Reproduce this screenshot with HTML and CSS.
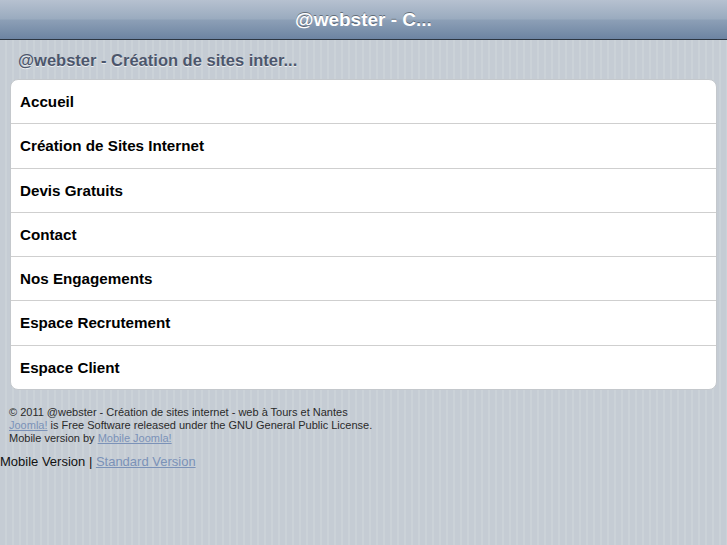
FILE: index.html
```html
<!DOCTYPE html>
<html lang="fr">
<head>
<meta charset="utf-8">
<title>@webster</title>
<link rel="stylesheet" href="styles.css">
</head>
<body>
<div class="toolbar"><h1 class="title">@webster - C...</h1></div>
<h2 class="subtitle">@webster - Création de sites inter...</h2>
<ul class="menu">
  <li class="item">Accueil</li>
  <li class="item">Création de Sites Internet</li>
  <li class="item">Devis Gratuits</li>
  <li class="item">Contact</li>
  <li class="item">Nos Engagements</li>
  <li class="item">Espace Recrutement</li>
  <li class="item">Espace Client</li>
</ul>
<p class="footer">© 2011 @webster - Création de sites internet - web à Tours et Nantes<br><a class="link" href="#">Joomla!</a> is Free Software released under the GNU General Public License.<br>Mobile version by <a class="link" href="#">Mobile Joomla!</a></p>
<p class="switch">Mobile Version | <a class="link" href="#">Standard Version</a></p>
</body>
</html>
```
FILE: styles.css
```css
html, body {
  margin: 0;
  padding: 0;
}
body {
  font-family: "Liberation Sans", Arial, sans-serif;
  background-color: #c5ccd4;
  background-image: repeating-linear-gradient(90deg, #c5ccd4 0, #c5ccd4 5px, #cbd2d8 5px, #cbd2d8 7px);
  min-height: 545px;
  color: #000;
}
.toolbar {
  height: 39px;
  border-bottom: 1px solid #2d3642;
  background: linear-gradient(#b6c1d0 0%, #9aabbf 48%, #8c9fb6 52%, #6d84a2 100%);
}
.title {
  margin: 0;
  text-align: center;
  color: #fff;
  font-size: 19px;
  font-weight: bold;
  line-height: 39px;
  text-shadow: rgba(0, 0, 0, 0.4) 0 -1px 0;
}
.subtitle {
  margin: 10px 18px 9px;
  font-size: 16.5px;
  line-height: 20px;
  font-weight: bold;
  color: #4c566c;
  text-shadow: rgba(255, 255, 255, 0.7) 0 1px 0;
}
.menu {
  list-style: none;
  margin: 0 10px;
  padding: 0;
  background: #fff;
  border: 1px solid #c4c8cc;
  border-radius: 8px;
}
.item {
  height: 43.3px;
  line-height: 43.3px;
  padding: 0 9px;
  font-size: 15.2px;
  font-weight: bold;
  border-top: 1px solid #cfcfcf;
}
.item:first-child {
  border-top: none;
}
.footer {
  margin: 16px 9px 0;
  font-size: 11px;
  line-height: 13px;
  color: #2a2a2a;
}
.link {
  color: #7b92b8;
  text-decoration: underline;
}
.switch {
  margin: 9px 0 0;
  font-size: 13px;
  line-height: 16px;
  color: #111;
}
```
